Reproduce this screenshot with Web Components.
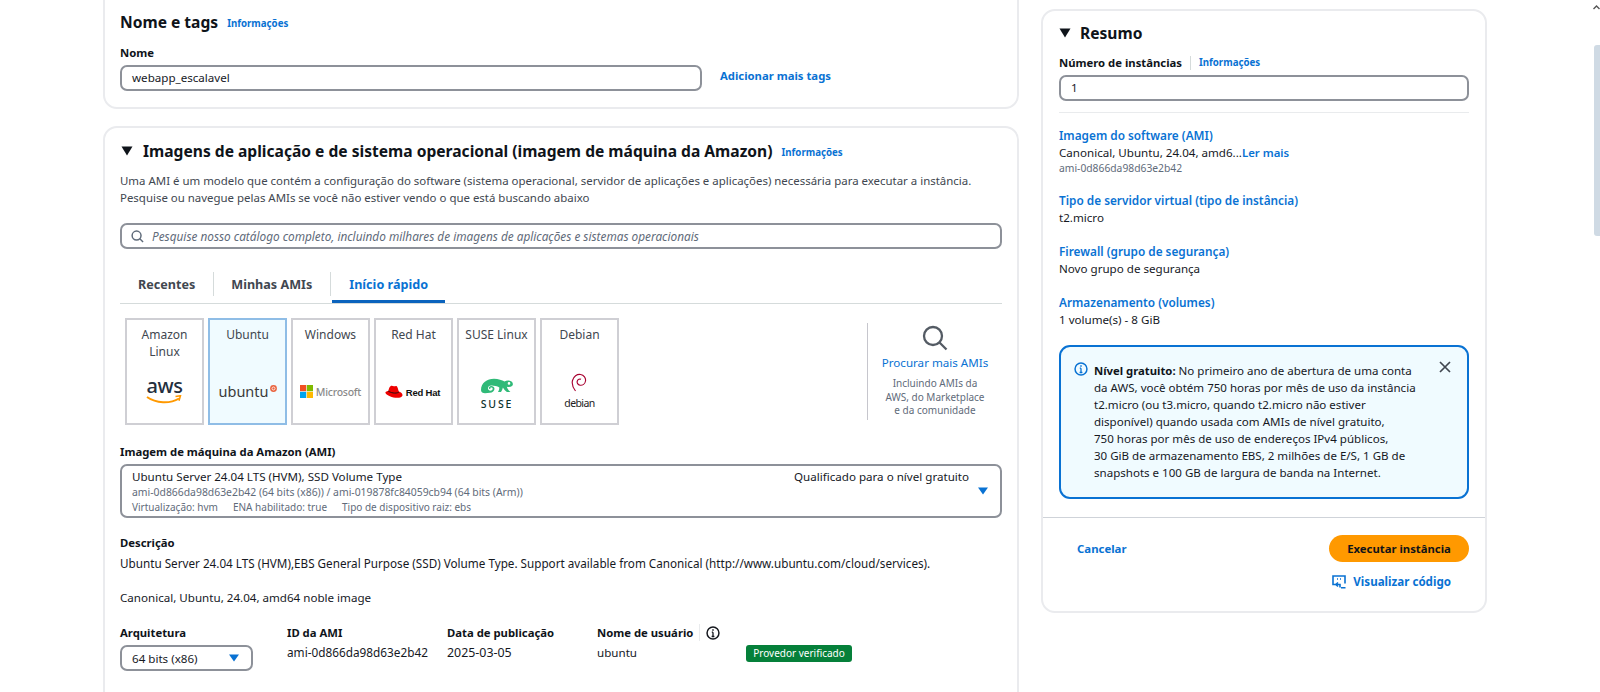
<!DOCTYPE html>
<html lang="pt-BR">
<head>
<meta charset="utf-8">
<title>Executar instância</title>
<style>
	html, body { margin: 0; height: 692px; overflow: hidden; background: #fff; }
	body {
		display: flex;
		font-family: "Noto Sans", "Open Sans", sans-serif;
		font-size: 11.6px;
		line-height: 17px;
		color: #16191f;
	}
</style>
</head>
<body>
<launch-page>
	<aws-card slot="left" class="first">
		<card-heading title="Nome e tags" plain></card-heading>
		<field-label style="margin-top:11px">Nome</field-label>
		<div style="display:flex;align-items:center;gap:18px;margin-top:4px">
			<text-box value="webapp_escalavel" style="width:582px"></text-box>
			<aws-link bold style="margin-top:-5px">Adicionar mais tags</aws-link>
		</div>
	</aws-card>

	<aws-card slot="left">
		<card-heading title="Imagens de aplicação e de sistema operacional (imagem de máquina da Amazon)"></card-heading>
		<p style="margin:10px 0 0;color:#414750;white-space:nowrap;font-size:11.45px">Uma AMI é um modelo que contém a configuração do software (sistema operacional, servidor de aplicações e aplicações) necessária para executar a instância.<br>Pesquise ou navegue pelas AMIs se você não estiver vendo o que está buscando abaixo</p>
		<search-box style="margin-top:17px" placeholder="Pesquise nosso catálogo completo, incluindo milhares de imagens de aplicações e sistemas operacionais"></search-box>
		<ami-tabs style="margin-top:13px"></ami-tabs>
		<div style="display:flex;margin-top:14px;padding-left:5px;gap:4px;align-items:center">
			<ami-tile name="Amazon Linux"><os-logo kind="aws"></os-logo></ami-tile>
			<ami-tile name="Ubuntu" selected><os-logo kind="ubuntu"></os-logo></ami-tile>
			<ami-tile name="Windows"><os-logo kind="windows"></os-logo></ami-tile>
			<ami-tile name="Red Hat"><os-logo kind="redhat"></os-logo></ami-tile>
			<ami-tile name="SUSE Linux"><os-logo kind="suse"></os-logo></ami-tile>
			<ami-tile name="Debian"><os-logo kind="debian"></os-logo></ami-tile>
			<more-amis style="margin-left:auto"></more-amis>
		</div>
		<field-label style="margin-top:18px">Imagem de máquina da Amazon (AMI)</field-label>
		<ami-select style="margin-top:4px"></ami-select>
		<field-label style="margin-top:16px">Descrição</field-label>
		<p style="margin:4px 0 0;white-space:nowrap;font-size:11.7px">Ubuntu Server 24.04 LTS (HVM),EBS General Purpose (SSD) Volume Type. Support available from Canonical (http://www.ubuntu.com/cloud/services).</p>
		<p style="margin:17px 0 0">Canonical, Ubuntu, 24.04, amd64 noble image</p>
		<ami-details style="margin-top:18px"></ami-details>
	</aws-card>

	<aws-card slot="right" flush>
		<div style="padding:0 16px 0 16px">
			<card-heading title="Resumo" arrow plain></card-heading>
			<div style="display:flex;align-items:center;margin-top:10px;height:17px">
				<field-label>Número de instâncias</field-label>
				<span style="width:1px;height:14px;background:#d5dbdb;margin:0 8px"></span>
				<aws-link small>Informações</aws-link>
			</div>
			<text-box value="1" style="margin-top:4px"></text-box>
			<div style="height:1px;background:#e9ebed;margin-top:11px"></div>
			<summary-item title="Imagem do software (AMI)" style="margin-top:14px">
				Canonical, Ubuntu, 24.04, amd6...<aws-link>Ler mais</aws-link>
				<div style="font-size:10.3px;line-height:14px;color:#5f6b7a">ami-0d866da98d63e2b42</div>
			</summary-item>
			<summary-item title="Tipo de servidor virtual (tipo de instância)" style="margin-top:17px">t2.micro</summary-item>
			<summary-item title="Firewall (grupo de segurança)" style="margin-top:17px">Novo grupo de segurança</summary-item>
			<summary-item title="Armazenamento (volumes)" style="margin-top:17px">1 volume(s) - 8 GiB</summary-item>
			<free-tier-alert style="margin-top:17px"></free-tier-alert>
		</div>
		<summary-footer style="margin-top:18px"></summary-footer>
	</aws-card>
</launch-page>

<script>
function shadow(el, html) {
	const t = document.createElement('template');
	t.innerHTML = html;
	el.attachShadow({ mode: 'open' }).appendChild(t.content.cloneNode(true));
}

const BLUE = '#0972d3';
const INPUT_BORDER = '#8d9199';
const INFO_ICON = (color, size) => `<svg width="${size}" height="${size}" viewBox="0 0 16 16" fill="none" stroke="${color}" stroke-width="1.7"><circle cx="8" cy="8" r="6.8"/><path d="M8 7v5M6.4 12h3.2M6.6 7H8" stroke-width="1.5"/><path d="M8 3.6v1.8" stroke-width="1.7"/></svg>`;

class LaunchPage extends HTMLElement {
	connectedCallback() {
		shadow(this, `<style>
			:host { flex: 1; display: flex; height: 692px; }
			.main {
				flex: 1;
				display: grid;
				grid-template-columns: 916px 446px;
				column-gap: 22px;
				align-items: start;
				padding-left: 103px;
			}
			.left { display: flex; flex-direction: column; gap: 17px; margin-top: -20px; }
			.right { margin-top: 9px; }
			.bar { width: 15px; display: flex; flex-direction: column; align-items: flex-end; background: #fff; }
			.up { margin: 4px 0 0; }
			.thumb { width: 6px; margin-top: 35px; height: 191px; border-radius: 3px 0 0 3px; background: #cfdae4; }
		</style>
		<div class="main">
			<div class="left"><slot name="left"></slot></div>
			<div class="right"><slot name="right"></slot></div>
		</div>
		<div class="bar">
			<svg class="up" width="7" height="6" viewBox="0 0 7 6" fill="none" stroke="#555" stroke-width="1.4"><path d="M.5 5l3-3 3 3"/></svg>
			<div class="thumb"></div>
		</div>`);
	}
}

class AwsCard extends HTMLElement {
	connectedCallback() {
		const flush = this.hasAttribute('flush');
		const first = this.classList.contains('first');
		shadow(this, `<style>
			:host {
				display: block;
				box-sizing: border-box;
				border: 2px solid #eaebee;
				border-radius: 14px;
				background: #fff;
				padding: ${first ? '29px 16px 16px 15px' : flush ? '11px 0 0 0' : '12px 15px 0 15px'};
				${flush ? 'height: 604px;' : first ? '' : 'height: 640px;'}
			}
		</style><slot></slot>`);
	}
}

class CardHeading extends HTMLElement {
	connectedCallback() {
		const resumo = this.getAttribute('title') === 'Resumo';
		const plain = this.hasAttribute('plain') && !this.hasAttribute('arrow');
		shadow(this, `<style>
			:host { display: flex; align-items: center; height: 22px; }
			h2 { margin: 0; font-size: 15.6px; line-height: 22px; font-weight: 700; color: #0f141a; }
			svg { margin: ${resumo ? '0 9px 0 0' : '0 10px 0 1px'}; flex: none; }
			aws-link { margin-left: 9px; }
		</style>
		${plain ? '' : '<svg width="12" height="10" viewBox="0 0 12 10"><path d="M0.5 0.5h11L6 9.5z" fill="#0f141a"/></svg>'}
		<h2>${this.getAttribute('title')}</h2>
		${resumo ? '' : '<aws-link small style="margin-top:3px">Informações</aws-link>'}`);
		this.removeAttribute('title');
	}
}

class AwsLink extends HTMLElement {
	connectedCallback() {
		const small = this.hasAttribute('small');
		const bold = this.hasAttribute('bold');
		shadow(this, `<style>
			:host {
				display: inline;
				color: ${BLUE};
				font-size: ${small ? '9.7px' : bold ? '11.3px' : '11.4px'};
				font-weight: ${small || bold ? '700' : '600'};
			}
		</style><slot></slot>`);
	}
}

class FieldLabel extends HTMLElement {
	connectedCallback() {
		shadow(this, `<style>
			:host { display: block; font-weight: 700; font-size: 11.3px; color: #0f141a; line-height: 17px; }
		</style><slot></slot>`);
	}
}

class TextBox extends HTMLElement {
	connectedCallback() {
		shadow(this, `<style>
			:host {
				display: block;
				box-sizing: border-box;
				height: 26px;
				border: 2px solid ${INPUT_BORDER};
				border-radius: 7px;
				padding: 0 10px;
				line-height: 22px;
			}
		</style>${this.getAttribute('value')}`);
	}
}

class SearchBox extends HTMLElement {
	connectedCallback() {
		shadow(this, `<style>
			:host {
				display: flex;
				align-items: center;
				gap: 8px;
				box-sizing: border-box;
				height: 26px;
				border: 2px solid ${INPUT_BORDER};
				border-radius: 7px;
				padding: 0 9px;
				font-style: italic;
				font-size: 11.8px;
				color: #5f6b7a;
				white-space: nowrap;
			}
			svg { flex: none; }
		</style>
		<svg width="13" height="13" viewBox="0 0 14 14" fill="none" stroke="#5f6b7a" stroke-width="1.6"><circle cx="6" cy="6" r="4.8"/><path d="M9.5 9.5L13 13"/></svg>
		${this.getAttribute('placeholder')}`);
	}
}

class AmiTabs extends HTMLElement {
	connectedCallback() {
		shadow(this, `<style>
			:host {
				display: flex;
				align-items: flex-end;
				height: 42px;
				border-bottom: 1px solid #d5dbdb;
				box-sizing: border-box;
				font-weight: 700;
				font-size: 12.6px;
				color: #414750;
			}
			.tab {
				height: 41px;
				box-sizing: border-box;
				display: flex;
				align-items: center;
				padding: 4px 18px 0;
				position: relative;
			}
			.tab + .tab::before {
				content: "";
				position: absolute;
				left: 0;
				top: 10px;
				height: 24px;
				width: 1px;
				background: #d5dbdb;
			}
			.tab.active {
				color: ${BLUE};
				border-bottom: 3px solid #0b63bd;
				margin-left: 2px;
				padding: 7px 17px 0;
			}
			.tab.active::before { left: -2px; }
		</style>
		<div class="tab">Recentes</div>
		<div class="tab">Minhas AMIs</div>
		<div class="tab active">Início rápido</div>`);
	}
}

class AmiTile extends HTMLElement {
	connectedCallback() {
		const on = this.hasAttribute('selected');
		shadow(this, `<style>
			:host {
				display: flex;
				flex-direction: column;
				align-items: center;
				box-sizing: border-box;
				width: 79px;
				height: 107px;
				padding: 6px 2px 5px;
				border: 2px solid ${on ? '#8fbde6' : '#cfcfd4'};
				background: ${on ? '#f0fbff' : '#fff'};
				text-align: center;
				font-size: 12px;
				color: #414750;
			}
			.logo { margin-top: auto; height: 52px; display: flex; align-items: center; justify-content: center; }
		</style>
		<div>${this.getAttribute('name')}</div>
		<div class="logo"><slot></slot></div>`);
	}
}

class OsLogo extends HTMLElement {
	connectedCallback() {
		const logos = {
			aws: `<div class="col" style="margin-top:-3px">
				<span style="font:500 20px/18px 'Noto Sans',sans-serif;color:#232f3e;letter-spacing:-.4px">aws</span>
				<svg width="36" height="10" viewBox="0 0 36 10" fill="none"><path d="M1 2c9 6.500 23 7 32 1.500" stroke="#f90" stroke-width="1.900"/><path d="M29.500 1.500l5-.800-1.500 5" stroke="#f90" stroke-width="1.500"/></svg>
			</div>`,
			ubuntu: `<div class="row" style="gap:1px;margin-top:-2px;align-items:flex-start">
				<span style="font:400 14.500px/18px 'Noto Sans',sans-serif;color:#3a3a3a;">ubuntu</span>
				<svg width="7" height="7" viewBox="0 0 7 7" style="margin-top:3px"><circle cx="3.500" cy="3.500" r="3.400" fill="#e9633f"/><circle cx="3.500" cy="3.500" r="1.500" fill="none" stroke="#fff" stroke-width=".8"/></svg>
			</div>`,
			windows: `<div class="row" style="gap:3px;margin-top:-1px">
				<svg width="13" height="13" viewBox="0 0 13 13"><rect width="6.200" height="6.200" fill="#f25022"/><rect x="6.800" width="6.200" height="6.200" fill="#7fba00"/><rect y="6.800" width="6.200" height="6.200" fill="#00a4ef"/><rect x="6.800" y="6.800" width="6.200" height="6.200" fill="#ffb900"/></svg>
				<span style="font:500 10.500px/14px 'Noto Sans',sans-serif;color:#8a8a8a;letter-spacing:-.25px">Microsoft</span>
			</div>`,
			redhat: `<div class="row" style="gap:3px;margin:2px 2px 0 0">
				<svg width="18" height="16" viewBox="0 0 18 16"><path d="M5.500 1.200c1.300-.8 2.200 0 3.500 0s2-.8 3 .2c.8.9 1 3 1.800 5 1.600.5 3.700 1.700 3.700 3.500 0 2-2.500 2.900-5.500 2.900-4.500 0-10.500-2.400-11.500-4.800C0 6.500 2.800 6 3.300 6c.4-1.700 1-4 2.200-4.800z" fill="#e00"/><path d="M3.200 6.100c2 1.400 7.500 3.100 10.700 1" fill="none" stroke="#111" stroke-width=".9"/></svg>
				<span style="font:800 9.500px/12px 'Liberation Sans',sans-serif;color:#111;letter-spacing:-.2px">Red Hat</span>
			</div>`,
			suse: `<div class="col" style="margin-top:3px">
				<svg width="34" height="18" viewBox="0 0 34 18"><path d="M1 12C1 5 7 .8 14 .8c4.500 0 8 1.500 10.500 2.600 1.800-1 5-1.400 7 .1 1.600 1.200 1.900 3.500.5 4.600-1.300 1-3.400 1-5.200.6.700 2.200 2.200 4 3.600 5.300h-3.500c-1.700-1.300-3-3.100-4-4.600-.4 1.900-1 3.400-1.900 4.600h-3c1-1.500 1.300-3.100 1.300-4.500-1.600-1.100-4-1.900-6.200-1.700C9.700 7.100 8 8.500 8 10.300c0 1.400 1.100 2.400 2.500 2.400 1.300 0 2.200-.9 2.200-1.900 0-.9-.7-1.400-1.400-1.400-.7 0-1.100.4-1.100.9 0 .3.200.6.500.7-1.400.5-2.400-.9-1.500-2.100 1.600-1.700 5.300-.6 5.300 1.900 0 2.300-2 4-4.600 4C6.500 15 1 16.500 1 12z" fill="#30ba78"/><circle cx="29" cy="5.400" r="1.300" fill="#fff"/></svg>
				<span style="font:500 10.500px/12px 'Noto Sans',sans-serif;letter-spacing:1.900px;color:#0c322c;margin:2px 0 0 1px">SUSE</span>
			</div>`,
			debian: `<div class="col" style="margin-top:-3px">
				<svg width="16" height="20" viewBox="0 0 16 20" fill="none" stroke="#a80030" stroke-width="1.150"><path d="M4.500 18C1.800 14.500.6 11 1.500 7.500 2.500 3.500 6 1 9.500 1.500 13 2 15 5 14.500 8c-.5 3-3 4.600-5.500 4.200C6.800 11.800 5.700 9.800 6.300 8c.6-1.600 2.400-2.300 3.700-1.700"/></svg>
				<span style="font:400 10.500px/12px 'Noto Sans',sans-serif;color:#222;letter-spacing:-.6px;margin-top:4px">debian</span>
			</div>`
		};
		shadow(this, `<style>
			:host { display: block; }
			.row { display: flex; align-items: center; }
			.col { display: flex; flex-direction: column; align-items: center; }
		</style>${logos[this.getAttribute('kind')]}`);
	}
}

class MoreAmis extends HTMLElement {
	connectedCallback() {
		shadow(this, `<style>
			:host {
				display: flex;
				flex-direction: column;
				align-items: center;
				box-sizing: border-box;
				width: 135px;
				height: 97px;
				border-left: 1px solid #c6c6cd;
				text-align: center;
			}
			svg { display: block; margin-top: 2px; }
			.t { color: ${BLUE}; margin-top: 3px; white-space: nowrap; }
			.s { color: #5f6b7a; font-size: 10px; line-height: 13.500px; margin-top: 6px; }
		</style>
		<svg width="26" height="26" viewBox="0 0 26 26" fill="none" stroke="#545b64" stroke-width="2.300"><circle cx="11" cy="11" r="9"/><path d="M17.500 17.500l7 7"/></svg>
		<div class="t">Procurar mais AMIs</div>
		<div class="s">Incluindo AMIs da<br>AWS, do Marketplace<br>e da comunidade</div>`);
	}
}

class AmiSelect extends HTMLElement {
	connectedCallback() {
		shadow(this, `<style>
			:host {
				display: flex;
				box-sizing: border-box;
				height: 54px;
				border: 2px solid ${INPUT_BORDER};
				border-radius: 7px;
				padding: 3px 12px 0 10px;
			}
			.main { flex: 1; }
			.top { line-height: 16px; }
			.sub { font-size: 10.4px; line-height: 14.500px; color: #5f6b7a; }
			.end { display: flex; flex-direction: column; align-items: flex-end; }
			.tag { margin-right: 19px; line-height: 16px; }
			svg { margin-top: 2px; }
			.mid { display: flex; gap: 15px; font-size: 10px; }
		</style>
		<div class="main">
			<div class="top">Ubuntu Server 24.04 LTS (HVM), SSD Volume Type</div>
			<div class="sub">ami-0d866da98d63e2b42 (64 bits (x86)) / ami-019878fc84059cb94 (64 bits (Arm))</div>
			<div class="sub mid"><span>Virtualização: hvm</span><span>ENA habilitado: true</span><span>Tipo de dispositivo raiz: ebs</span></div>
		</div>
		<div class="end">
			<div class="tag">Qualificado para o nível gratuito</div>
			<svg width="10" height="8" viewBox="0 0 10 8"><path d="M0 0.500h10L5 7.500z" fill="${BLUE}"/></svg>
		</div>`);
	}
}

class AmiDetails extends HTMLElement {
	connectedCallback() {
		shadow(this, `<style>
			:host {
				display: grid;
				grid-template-columns: 167px 160px 150px 149px auto;
				grid-template-rows: 17px auto;
				row-gap: 4px;
			}
			b { font-weight: 700; font-size: 11.3px; color: #0f141a; }
			.user { display: flex; align-items: center; }
			.user i { width: 1px; height: 17px; background: #e9ebed; margin: 0 6px; }
			.val { margin-top: -1px; }
			.arch {
				box-sizing: border-box;
				width: 133px;
				height: 26px;
				display: flex;
				align-items: center;
				justify-content: space-between;
				padding: 0 12px 0 10px;
				border: 2px solid ${INPUT_BORDER};
				border-radius: 7px;
			}
			.badge {
				justify-self: start;
				box-sizing: border-box;
				width: 106px;
				height: 17px;
				background: #05803a;
				color: #fff;
				border-radius: 3px;
				font-size: 10px;
				line-height: 17px;
				text-align: center;
				white-space: nowrap;
			}
		</style>
		<b>Arquitetura</b>
		<b>ID da AMI</b>
		<b>Data de publicação</b>
		<div class="user"><b>Nome de usuário</b><i></i>${INFO_ICON('#16191f', 14)}</div>
		<span></span>
		<div class="arch">64 bits (x86)<svg width="10" height="8" viewBox="0 0 10 8"><path d="M0 0.500h10L5 7.500z" fill="${BLUE}"/></svg></div>
		<div class="val" style="font-size:11.8px">ami-0d866da98d63e2b42</div>
		<div class="val" style="font-size:12.4px">2025-03-05</div>
		<div class="val">ubuntu</div>
		<div class="badge">Provedor verificado</div>`);
	}
}

class SummaryItem extends HTMLElement {
	connectedCallback() {
		shadow(this, `<style>
			:host { display: block; }
			.t { color: ${BLUE}; font-weight: 600; font-size: 11.8px; }
		</style>
		<div class="t">${this.getAttribute('title')}</div>
		<slot></slot>`);
		this.removeAttribute('title');
	}
}

class FreeTierAlert extends HTMLElement {
	connectedCallback() {
		shadow(this, `<style>
			:host {
				display: flex;
				box-sizing: border-box;
				height: 154px;
				border: 2px solid #0972d3;
				border-radius: 11px;
				background: #f0fbff;
				padding: 15px 16px 0 13px;
			}
			.icon { flex: none; margin: 0 6px 0 0; width: 14px; }
			.txt { flex: 1; white-space: nowrap; font-size: 11.55px; }
			b { font-weight: 700; font-size: 11.3px; color: #0f141a; }
			svg { display: block; }
			.x { flex: none; margin-top: -1px; }
		</style>
		<div class="icon">${INFO_ICON(BLUE, 14)}</div>
		<div class="txt"><b>Nível gratuito:</b> No primeiro ano de abertura de uma conta<br>da AWS, você obtém 750 horas por mês de uso da instância<br>t2.micro (ou t3.micro, quando t2.micro não estiver<br>disponível) quando usada com AMIs de nível gratuito,<br>750 horas por mês de uso de endereços IPv4 públicos,<br>30 GiB de armazenamento EBS, 2 milhões de E/S, 1 GB de<br>snapshots e 100 GB de largura de banda na Internet.</div>
		<svg class="x" width="12" height="12" viewBox="0 0 12 12" fill="none" stroke="#414750" stroke-width="1.700"><path d="M1 1l10 10M11 1L1 11"/></svg>`);
	}
}

class SummaryFooter extends HTMLElement {
	connectedCallback() {
		shadow(this, `<style>
			:host {
				display: block;
				border-top: 1px solid #cfd3d9;
				padding: 17px 16px 0 34px;
				font-weight: 700;
				font-size: 11.4px;
				color: ${BLUE};
			}
			.row { display: flex; align-items: center; justify-content: space-between; }
			.btn {
				width: 140px;
				height: 27px;
				border-radius: 14px;
				background: #ff9900;
				color: #0f141a;
				display: flex;
				align-items: center;
				justify-content: center;
				font-size: 11.3px;
			}
			.code { display: flex; align-items: center; justify-content: flex-end; gap: 7px; margin: 11px 18px 0 0; font-size: 11.6px; }
		</style>
		<div class="row"><span>Cancelar</span><div class="btn">Executar instância</div></div>
		<div class="code">
			<svg width="14" height="14" viewBox="0 0 14 14" fill="none" stroke="${BLUE}" stroke-width="1.600"><path d="M4 9.500H1V1h12v7.500"/><path d="M6 7.500L4 9.500l2 2"/><path d="M4.500 9.500H8v3M9 12.800h4.500"/><path d="M5 4h1M8 4h1"/></svg>
			<span>Visualizar código</span>
		</div>`);
	}
}

customElements.define('launch-page', LaunchPage);
customElements.define('aws-card', AwsCard);
customElements.define('card-heading', CardHeading);
customElements.define('aws-link', AwsLink);
customElements.define('field-label', FieldLabel);
customElements.define('text-box', TextBox);
customElements.define('search-box', SearchBox);
customElements.define('ami-tabs', AmiTabs);
customElements.define('ami-tile', AmiTile);
customElements.define('os-logo', OsLogo);
customElements.define('more-amis', MoreAmis);
customElements.define('ami-select', AmiSelect);
customElements.define('ami-details', AmiDetails);
customElements.define('summary-item', SummaryItem);
customElements.define('free-tier-alert', FreeTierAlert);
customElements.define('summary-footer', SummaryFooter);
</script>
</body>
</html>
